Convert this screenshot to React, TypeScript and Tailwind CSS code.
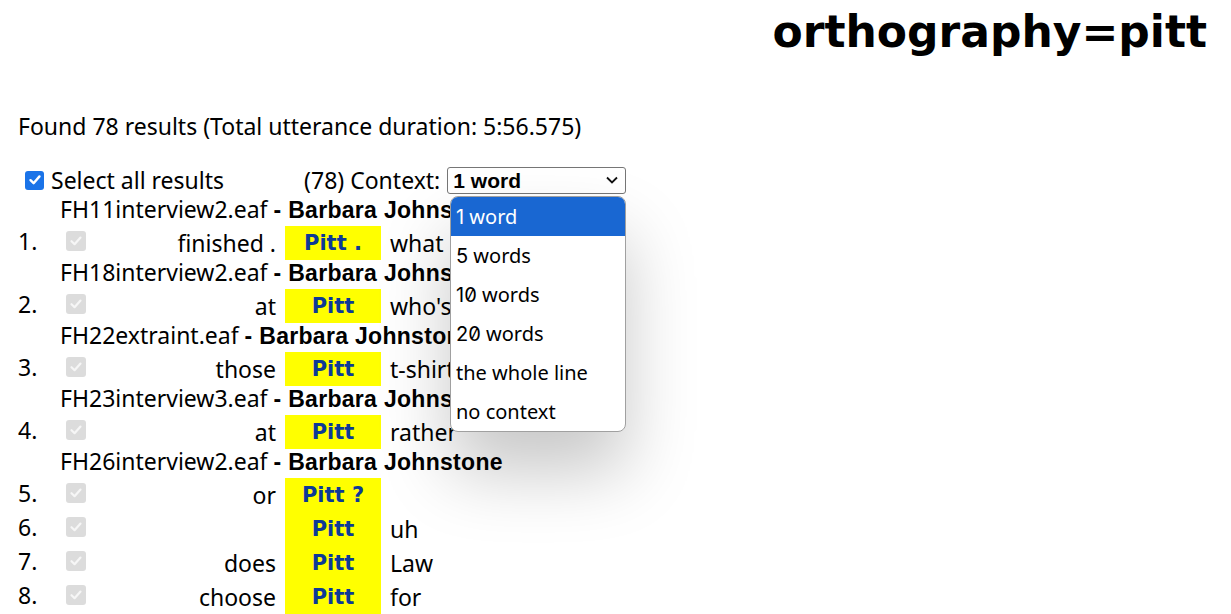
import React from "react";

type Row = { n: number; left: string; match: string; right: string };
type Group = { file: string; rows: Row[] };

const groups: Group[] = [
  { file: "FH11interview2.eaf", rows: [{ n: 1, left: "finished .", match: "Pitt .", right: "what" }] },
  { file: "FH18interview2.eaf", rows: [{ n: 2, left: "at", match: "Pitt", right: "who's" }] },
  { file: "FH22extraint.eaf", rows: [{ n: 3, left: "those", match: "Pitt", right: "t-shirt" }] },
  { file: "FH23interview3.eaf", rows: [{ n: 4, left: "at", match: "Pitt", right: "rather" }] },
  {
    file: "FH26interview2.eaf",
    rows: [
      { n: 5, left: "or", match: "Pitt ?", right: "" },
      { n: 6, left: "", match: "Pitt", right: "uh" },
      { n: 7, left: "does", match: "Pitt", right: "Law" },
      { n: 8, left: "choose", match: "Pitt", right: "for" },
    ],
  },
];

const options: [string, string][] = [
  ["1", " word"],
  ["5", " words"],
  ["10", " words"],
  ["20", " words"],
  ["", "the whole line"],
  ["", "no context"],
];

function GreyCheck() {
  return (
    <div className="w-[20px] h-[20px] rounded-[3px] bg-[#dcdcdc] flex items-center justify-center">
      <svg width="14" height="14" viewBox="0 0 14 14">
        <path d="M2.5 7.2 L5.6 10.2 L11.5 3.6" fill="none" stroke="#f6f6f6" strokeWidth="2.2" strokeLinecap="round" strokeLinejoin="round" />
      </svg>
    </div>
  );
}

function BlueCheck() {
  return (
    <div className="w-[19px] h-[19px] rounded-[3px] bg-[#1a73e8] flex items-center justify-center">
      <svg width="14" height="14" viewBox="0 0 14 14">
        <path d="M2.5 7.2 L5.6 10.2 L11.5 3.4" fill="none" stroke="#ffffff" strokeWidth="2.4" strokeLinecap="round" strokeLinejoin="round" />
      </svg>
    </div>
  );
}

export default function App() {
  return (
    <div className="relative w-[1231px] h-[614px] overflow-hidden bg-white text-black font-['Noto_Sans',sans-serif] text-[23px]">
      <div className="flex justify-end pr-[24px] pt-[6px]">
        <h1 className="text-[44px] leading-[52px] font-bold font-['DejaVu_Sans',sans-serif]">orthography=pitt</h1>
      </div>
      <p className="mt-[53px] ml-[18px] leading-[30px]">Found 78 results (Total utterance duration: 5:56.575)</p>

      <div className="mt-[25px] flex items-center h-[28px]">
        <div className="ml-[25px]">
          <BlueCheck />
        </div>
        <span className="ml-[7px]">Select all results</span>
        <span className="ml-[80px]">(78) Context:</span>
        <div className="ml-[7px] w-[179px] h-[27px] border border-[#767676] rounded-[3px] flex items-center justify-between pl-[5px] pr-[6px]">
          <span className="font-['Liberation_Sans',sans-serif] font-bold text-[21px] leading-[25px]">1 word</span>
          <svg width="14" height="10" viewBox="0 0 14 10">
            <path d="M2 2.5 L7 7.5 L12 2.5" fill="none" stroke="#111" strokeWidth="1.8" />
          </svg>
        </div>
      </div>

      <div className="mt-[3px]">
        {groups.map((g) => (
          <div key={g.file}>
            <div className="pl-[60px] h-[29px] leading-[25px] whitespace-nowrap">
              {g.file}{" "}
              <span className="font-['Liberation_Sans',sans-serif] font-bold text-[23px] tracking-[0.3px]">- Barbara Johnstone</span>
            </div>
            {g.rows.map((r) => (
              <div key={r.n} className="flex h-[34px]">
                <div className="w-[66px] pl-[18px] leading-[24px] pt-[3px]">{r.n}.</div>
                <div className="w-[20px] pt-[5px]">
                  <GreyCheck />
                </div>
                <div className="w-[190px] text-right leading-[34px] whitespace-nowrap">{r.left}</div>
                <div className="ml-[9px] w-[96px] bg-[#ffff00] text-center leading-[34px] font-['DejaVu_Sans',sans-serif] text-[21px] font-bold text-[#0d3a97] whitespace-pre">
                  {r.match}
                </div>
                <div className="ml-[9px] leading-[34px] whitespace-nowrap">{r.right}</div>
              </div>
            ))}
          </div>
        ))}
      </div>

      <div className="absolute left-[450px] top-[196px] w-[176px] bg-white border border-[#a0a0a0] rounded-[8px] overflow-hidden shadow-[0_40px_70px_rgba(0,0,0,0.22)]">
        {options.map(([d, t], i) => (
          <div
            key={d + t}
            className={
              "h-[39px] leading-[39px] pl-[5px] text-[20px] whitespace-pre " +
              (i === 0 ? "bg-[#1967d2] text-white" : "text-black")
            }
          >
            {d && <span className="font-['Inter',sans-serif] [font-feature-settings:'zero']">{d}</span>}
            {t}
          </div>
        ))}
      </div>
    </div>
  );
}
